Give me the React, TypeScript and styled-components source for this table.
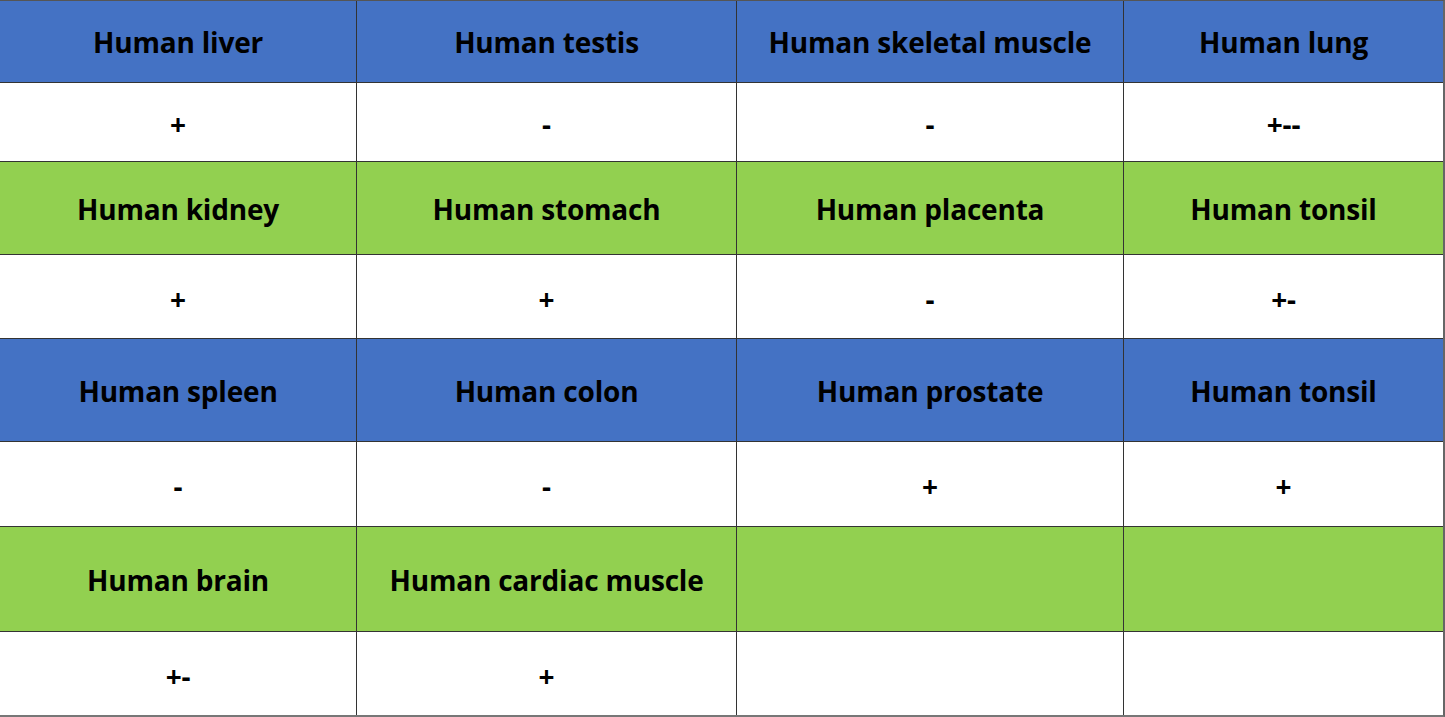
import styled, { createGlobalStyle } from 'styled-components';

const GlobalStyle = createGlobalStyle`
  html, body {
    margin: 0;
    padding: 0;
    background: #fff;
  }
`;

type Tone = 'blue' | 'green' | 'white';

const toneColors: Record<Tone, string> = {
  blue: '#4472c4',
  green: '#92d050',
  white: '#ffffff',
};

const Table = styled.div`
  display: grid;
  grid-template-columns: 356px 380px 387px 320px;
  grid-template-rows: 82px 79px 93px 84px 103px 85px 105px 83px;
  width: 1445px;
  height: 717px;
  box-sizing: border-box;
  border-top: 1px solid #555;
  border-right: 2px solid #666;
  border-bottom: 2px solid #777;
  font-family: "Open Sans", Lato, "Liberation Sans", sans-serif;
  font-weight: 700;
  color: #000;
`;

const Cell = styled.div<{ $tone: Tone; $first: boolean; $last: boolean }>`
  display: flex;
  align-items: center;
  justify-content: center;
  background: ${p => toneColors[p.$tone]};
  border-left: ${p => (p.$first ? 'none' : '1px solid #333')};
  border-bottom: ${p => (p.$last ? 'none' : '1px solid #333')};
  font-size: 28px;
  letter-spacing: -0.2px;
  padding-top: ${p => (p.$tone === 'white' ? '4px' : '1px')};
  box-sizing: border-box;
  white-space: nowrap;
`;

interface Row {
  tone: Tone;
  cells: string[];
}

const rows: Row[] = [
  { tone: 'blue', cells: ['Human liver', 'Human testis', 'Human skeletal muscle', 'Human lung'] },
  { tone: 'white', cells: ['+', '-', '-', '+--'] },
  { tone: 'green', cells: ['Human kidney', 'Human stomach', 'Human placenta', 'Human tonsil'] },
  { tone: 'white', cells: ['+', '+', '-', '+-'] },
  { tone: 'blue', cells: ['Human spleen', 'Human colon', 'Human prostate', 'Human tonsil'] },
  { tone: 'white', cells: ['-', '-', '+', '+'] },
  { tone: 'green', cells: ['Human brain', 'Human cardiac muscle', '', ''] },
  { tone: 'white', cells: ['+-', '+', '', ''] },
];

const App = () => {
  return (
    <>
      <GlobalStyle />
      <Table>
        {rows.map((row, r) =>
          row.cells.map((text, c) => (
            <Cell
              key={`${r}-${c}`}
              $tone={row.tone}
              $first={c === 0}
              $last={r === rows.length - 1}
            >
              {text}
            </Cell>
          ))
        )}
      </Table>
    </>
  );
};

export default App;
